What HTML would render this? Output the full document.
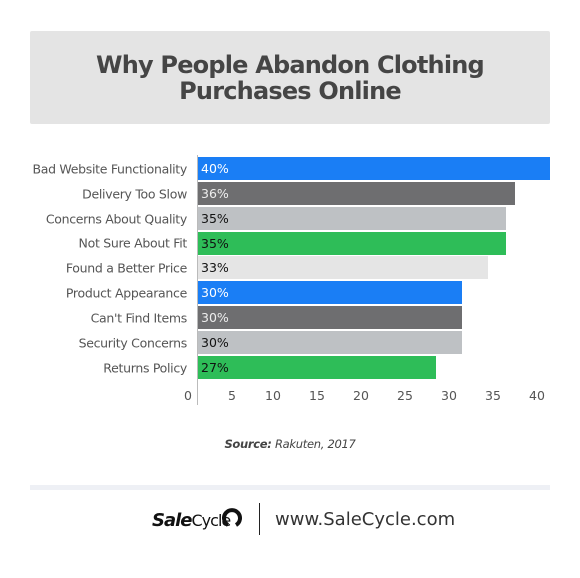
<!DOCTYPE html>
<html><head><style>
body{margin:0;width:580px;height:578px;background:#fff;font-family:"DejaVu Sans","Liberation Sans",sans-serif;position:relative;overflow:hidden}
.t{position:absolute;left:30px;top:31px;width:520px;height:93px;background:#e4e4e4;border-radius:2px}
.t div{position:absolute;width:100%;text-align:center;font-weight:bold;font-size:24px;color:#454545;letter-spacing:-0.8px}
.lab{position:absolute;right:393px;font-size:12.5px;color:#555;white-space:nowrap;transform:translateY(-50%);letter-spacing:-0.3px}
.bar{position:absolute;left:198px;height:23px}
.bar span{position:absolute;left:3px;top:4px;font-size:12.5px}
.tick{position:absolute;top:388px;font-size:12.5px;color:#555;transform:translateX(-50%)}
</style></head><body>
<div class="t"><div style="top:20px">Why People Abandon Clothing</div><div style="top:46px">Purchases Online</div></div>
<div style="position:absolute;left:197px;top:155px;width:1px;height:250px;background:#bbb"></div>

<div class="lab" style="top:169px">Bad Website Functionality</div>
<div class="bar" style="top:157px;width:352px;background:#1a7ef5"><span style="color:#fff">40%</span></div>
<div class="lab" style="top:194px">Delivery Too Slow</div>
<div class="bar" style="top:182px;width:317px;background:#6e6e70"><span style="color:#eee">36%</span></div>
<div class="lab" style="top:219px">Concerns About Quality</div>
<div class="bar" style="top:207px;width:308px;background:#bec1c4"><span style="color:#111">35%</span></div>
<div class="lab" style="top:243px">Not Sure About Fit</div>
<div class="bar" style="top:232px;width:308px;background:#2ebd58"><span style="color:#111">35%</span></div>
<div class="lab" style="top:268px">Found a Better Price</div>
<div class="bar" style="top:256px;width:290px;background:#e5e5e5"><span style="color:#111">33%</span></div>
<div class="lab" style="top:293px">Product Appearance</div>
<div class="bar" style="top:281px;width:264px;background:#1a7ef5"><span style="color:#fff">30%</span></div>
<div class="lab" style="top:318px">Can't Find Items</div>
<div class="bar" style="top:306px;width:264px;background:#6e6e70"><span style="color:#eee">30%</span></div>
<div class="lab" style="top:343px">Security Concerns</div>
<div class="bar" style="top:331px;width:264px;background:#bec1c4"><span style="color:#111">30%</span></div>
<div class="lab" style="top:368px">Returns Policy</div>
<div class="bar" style="top:356px;width:238px;background:#2ebd58"><span style="color:#111">27%</span></div>

<div class="tick" style="left:188px">0</div>
<div class="tick" style="left:232px">5</div>
<div class="tick" style="left:273px">10</div>
<div class="tick" style="left:317px">15</div>
<div class="tick" style="left:361px">20</div>
<div class="tick" style="left:405px">25</div>
<div class="tick" style="left:449px">30</div>
<div class="tick" style="left:493px">35</div>
<div class="tick" style="left:537px">40</div>

<div style="position:absolute;top:437px;width:580px;text-align:center;font-size:11.5px;font-style:italic;color:#444;letter-spacing:-0.3px"><b>Source:</b> Rakuten, 2017</div>
<div style="position:absolute;left:30px;top:485px;width:520px;height:5px;background:#eef0f5"></div>

<div style="position:absolute;left:152px;top:510px;font-size:18px;color:#111;letter-spacing:-1px"><b style="font-style:italic">Sale</b><span style="font-size:16px">Cycle</span></div>
<svg style="position:absolute;left:222px;top:505px" width="22" height="24" viewBox="0 0 22 24"><path d="M6 20 A8 8 0 1 1 14 20" fill="none" stroke="#111" stroke-width="4"/></svg>
<div style="position:absolute;left:259px;top:503px;width:1px;height:32px;background:#222"></div>
<div style="position:absolute;left:275px;top:509px;font-size:18px;color:#333">www.SaleCycle.com</div>
</body></html>
